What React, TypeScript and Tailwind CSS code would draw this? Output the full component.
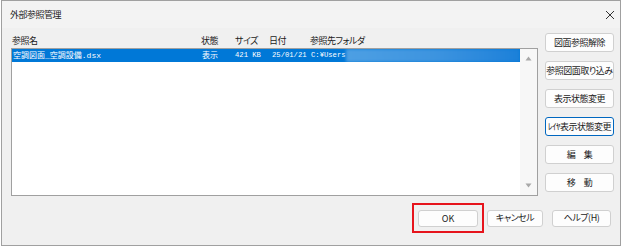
import React from "react";

const ui = {
  fontFamily: "'Noto Sans CJK JP', 'Noto Sans', sans-serif",
  fontFeatureSettings: "'palt'",
};
const mono = {
  fontFamily: "'Liberation Mono', 'Noto Sans CJK JP', monospace",
};

function SideButton({ label, focused }: { label: string; focused?: boolean }) {
  return (
    <div
      className={
        "w-[69px] h-[19px] flex items-center justify-center rounded-[3px] bg-[#fdfdfd] text-[9px] tracking-[-0.5px] text-[#1b1b1b] whitespace-nowrap " +
        (focused ? "border border-[#0067c0]" : "border border-[#d0d0d0]")
      }
    >
      {label}
    </div>
  );
}

export default function App() {
  return (
    <div className="w-[624px] h-[248px] bg-white" style={ui}>
      <div className="ml-[1px] w-[620px] h-[246px] border border-[#a0a0a0] bg-[#f0f0f0] flex flex-col">
        {/* title bar */}
        <div className="h-[27px] flex items-center justify-between pl-[8px] pr-[4px] bg-[#f3f3f3]">
          <span className="text-[9px] tracking-[-0.5px] text-[#1b1b1b]">外部参照管理</span>
          <svg width="10" height="10" viewBox="0 0 10 10" className="mr-[1px]">
            <path d="M1 1 L9 9 M9 1 L1 9" stroke="#333" strokeWidth="1" />
          </svg>
        </div>
        {/* body */}
        <div className="flex flex-col pl-[9px] pt-[5px]">
          <div className="flex">
            <div className="w-[527px] flex flex-col">
              <div className="h-[15px] text-[9px] tracking-[-0.5px] text-[#1b1b1b] flex items-center">
                <span className="w-[190px] pl-[1px]">参照名</span>
                <span className="w-[34px]">状態</span>
                <span className="w-[34px]">サイズ</span>
                <span className="w-[41px]">日付</span>
                <span>参照先フォルダ</span>
              </div>
              <div className="h-[148px] border border-[#a0a0a0] bg-white flex">
                <div className="w-[508px] flex flex-col">
                  <div className="h-[13px] bg-[#0078d7] text-white text-[8px] flex items-center overflow-hidden" style={mono}>
                    <span className="w-[190px] pl-[1px] whitespace-nowrap">空調図面_空調設備.dsx</span>
                    <span className="w-[33px] whitespace-nowrap">表示</span>
                    <span className="w-[37px] whitespace-nowrap text-[7.2px]">421 KB</span>
                    <span className="w-[39px] whitespace-nowrap text-[7.2px]">25/01/21</span>
                    <span className="w-[35px] whitespace-nowrap text-[7.2px]">C:¥Users</span>
                    <div className="flex-1 h-[13px] bg-gradient-to-r from-[#4d9fe3] via-[#3d94df] to-[#1a80d9] blur-[1.5px]" />
                  </div>
                </div>
                <div className="w-[17px] bg-[#f7f7f7] flex flex-col items-center justify-between py-[7px]">
                  <svg width="7" height="5" viewBox="0 0 7 5">
                    <path d="M3.5 0.5 L6.5 4.5 L0.5 4.5 Z" fill="#a8a8a8" />
                  </svg>
                  <svg width="7" height="5" viewBox="0 0 7 5">
                    <path d="M0.5 0.5 L6.5 0.5 L3.5 4.5 Z" fill="#a8a8a8" />
                  </svg>
                </div>
              </div>
            </div>
            <div className="ml-[7px] flex flex-col gap-[9px]">
              <SideButton label="図面参照解除" />
              <SideButton label="参照図面取り込み" />
              <SideButton label="表示状態変更" />
              <SideButton label="ﾚｲﾔ表示状態変更" focused />
              <SideButton label="編　集" />
              <SideButton label="移　動" />
            </div>
          </div>
          <div className="mt-[7px] flex items-center justify-end pr-[9px]">
            <div className="w-[72px] h-[30px] border-2 border-[#e6141c] flex items-center justify-center">
              <div className="w-[60px] h-[17px] mt-[1px] flex items-center justify-center rounded-[3px] bg-[#fdfdfd] border border-[#d0d0d0] text-[9px] text-[#1b1b1b]">
                OK
              </div>
            </div>
            <div className="ml-[3px] w-[56px] h-[17px] flex items-center justify-center rounded-[3px] bg-[#fdfdfd] border border-[#d0d0d0] text-[9px] tracking-[-0.5px] text-[#1b1b1b]">
              キャンセル
            </div>
            <div className="ml-[9px] w-[59px] h-[17px] flex items-center justify-center rounded-[3px] bg-[#fdfdfd] border border-[#d0d0d0] text-[9px] tracking-[-0.5px] text-[#1b1b1b]">
              ヘルプ(H)
            </div>
          </div>
        </div>
      </div>
    </div>
  );
}
